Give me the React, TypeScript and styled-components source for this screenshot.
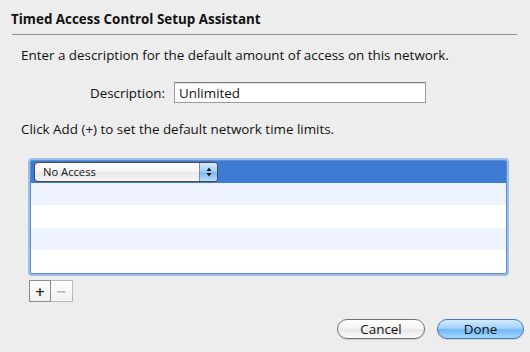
import React from "react";
import styled, { createGlobalStyle } from "styled-components";

const GlobalStyle = createGlobalStyle`
  html, body {
    margin: 0;
    padding: 0;
    background: #ededed;
  }
  * {
    box-sizing: border-box;
  }
`;

const rows = ["No Access", "", "", "", ""];

export default function App() {
  return (
    <>
      <GlobalStyle />
      <Window>
        <Title>Timed Access Control Setup Assistant</Title>
        <Divider />
        <Intro>Enter a description for the default amount of access on this network.</Intro>

        <FieldRow>
          <Label>Description:</Label>
          <TextInput defaultValue="Unlimited" />
        </FieldRow>

        <Hint>Click Add (+) to set the default network time limits.</Hint>

        <Table>
          {rows.map((value, i) => (
            <Row key={i} $selected={i === 0} $striped={i % 2 === 1}>
              {value && (
                <Popup>
                  <PopupLabel>{value}</PopupLabel>
                  <PopupArrows>
                    <svg width="8" height="12" viewBox="0 0 8 12">
                      <path d="M4 1.5 L6.5 5 L1.5 5 Z" fill="#1a1a1a" />
                      <path d="M4 10.5 L6.5 7 L1.5 7 Z" fill="#1a1a1a" />
                    </svg>
                  </PopupArrows>
                </Popup>
              )}
            </Row>
          ))}
        </Table>

        <Segments>
          <Segment>+</Segment>
          <Segment $disabled>−</Segment>
        </Segments>

        <Footer>
          <PillButton>Cancel</PillButton>
          <PillButton $primary>Done</PillButton>
        </Footer>
      </Window>
    </>
  );
}

const Window = styled.div`
  width: 530px;
  height: 352px;
  background: #ededed;
  font-family: "Open Sans", "DejaVu Sans", sans-serif;
  font-size: 13.4px;
  color: #111;
  display: flex;
  flex-direction: column;
  overflow: hidden;
`;

const Title = styled.div`
  padding: 11px 0 7px 11px;
  font-weight: 700;
  line-height: 16px;
`;

const Divider = styled.div`
  height: 1px;
  margin: 0 13px 0 12px;
  background: #8e8e8e;
`;

const Intro = styled.p`
  margin: 12px 0 0 21px;
  line-height: 16px;
`;

const FieldRow = styled.div`
  display: flex;
  align-items: center;
  margin-top: 19px;
  height: 21px;
`;

const Label = styled.span`
  width: 166px;
  text-align: right;
  padding-right: 1px;
  line-height: 16px;
`;

const TextInput = styled.input`
  margin-left: 8px;
  width: 252px;
  height: 21px;
  border: 1px solid #9a9a9a;
  border-top-color: #7c7c7c;
  background: #fff;
  box-shadow: inset 0 1px 0 #e2e2e2;
  padding: 0 4px;
  font: inherit;
  color: #111;
  outline: none;
`;

const Hint = styled.p`
  margin: 18px 0 0 21px;
  line-height: 16px;
`;

const Table = styled.div`
  margin: 23px 0 0 30px;
  width: 477px;
  height: 114px;
  border: 1px solid #5f8fd3;
  border-radius: 2px;
  box-shadow: 0 0 0 2px rgba(126, 168, 228, 0.7);
  background: #fff;
  display: flex;
  flex-direction: column;
  padding-bottom: 1px;
`;

const Row = styled.div<{ $selected?: boolean; $striped?: boolean }>`
  flex: 1;
  display: flex;
  align-items: center;
  padding-left: 3px;
  background: ${({ $selected, $striped }) =>
    $selected ? "#3d7ad1" : $striped ? "#eef3fd" : "#ffffff"};
`;

const Popup = styled.div`
  width: 184px;
  height: 20px;
  display: flex;
  border: 1px solid #4a4a4a;
  border-radius: 4px;
  overflow: hidden;
  background: linear-gradient(#ffffff 0%, #f6f6f6 45%, #e9e9e9 55%, #f7f7f7 100%);
`;

const PopupLabel = styled.span`
  flex: 1;
  padding-left: 8px;
  font-size: 11.2px;
  line-height: 18px;
  color: #111;
`;

const PopupArrows = styled.span`
  width: 18px;
  display: flex;
  align-items: center;
  justify-content: center;
  border-left: 1px solid #6d8fbd;
  background: linear-gradient(#d5eafd 0%, #a7d0f7 45%, #7fb8ef 55%, #b6dcfb 100%);
`;

const Segments = styled.div`
  display: flex;
  margin: 6px 0 0 29px;
`;

const Segment = styled.div<{ $disabled?: boolean }>`
  width: 22px;
  height: 22px;
  display: flex;
  align-items: center;
  justify-content: center;
  border: 1px solid ${({ $disabled }) => ($disabled ? "#b9b9b9" : "#8c8c8c")};
  border-left-width: ${({ $disabled }) => ($disabled ? 0 : "1px")};
  background: linear-gradient(#fdfdfd, #f1f1f1);
  font-family: "DejaVu Sans", sans-serif;
  font-size: 13px;
  font-weight: 700;
  color: ${({ $disabled }) => ($disabled ? "#b5b5b5" : "#2a2a2a")};
`;

const Footer = styled.div`
  display: flex;
  justify-content: flex-end;
  gap: 12px;
  margin: 17px 6px 0 0;
`;

const PillButton = styled.button<{ $primary?: boolean }>`
  width: ${({ $primary }) => ($primary ? "87px" : "88px")};
  height: 20px;
  border-radius: 10px;
  border: 1px solid ${({ $primary }) => ($primary ? "#4577ba" : "#707070")};
  background: ${({ $primary }) =>
    $primary
      ? "linear-gradient(#d3ebff 0%, #a3d2fb 45%, #73b6f4 55%, #a2d8ff 100%)"
      : "linear-gradient(#ffffff 0%, #f5f5f5 45%, #e8e8e8 55%, #fbfbfb 100%)"};
  box-shadow: 0 1px 1px rgba(0, 0, 0, 0.12);
  font: inherit;
  font-size: 13.4px;
  line-height: 18px;
  color: #111;
  padding: 0;
`;
